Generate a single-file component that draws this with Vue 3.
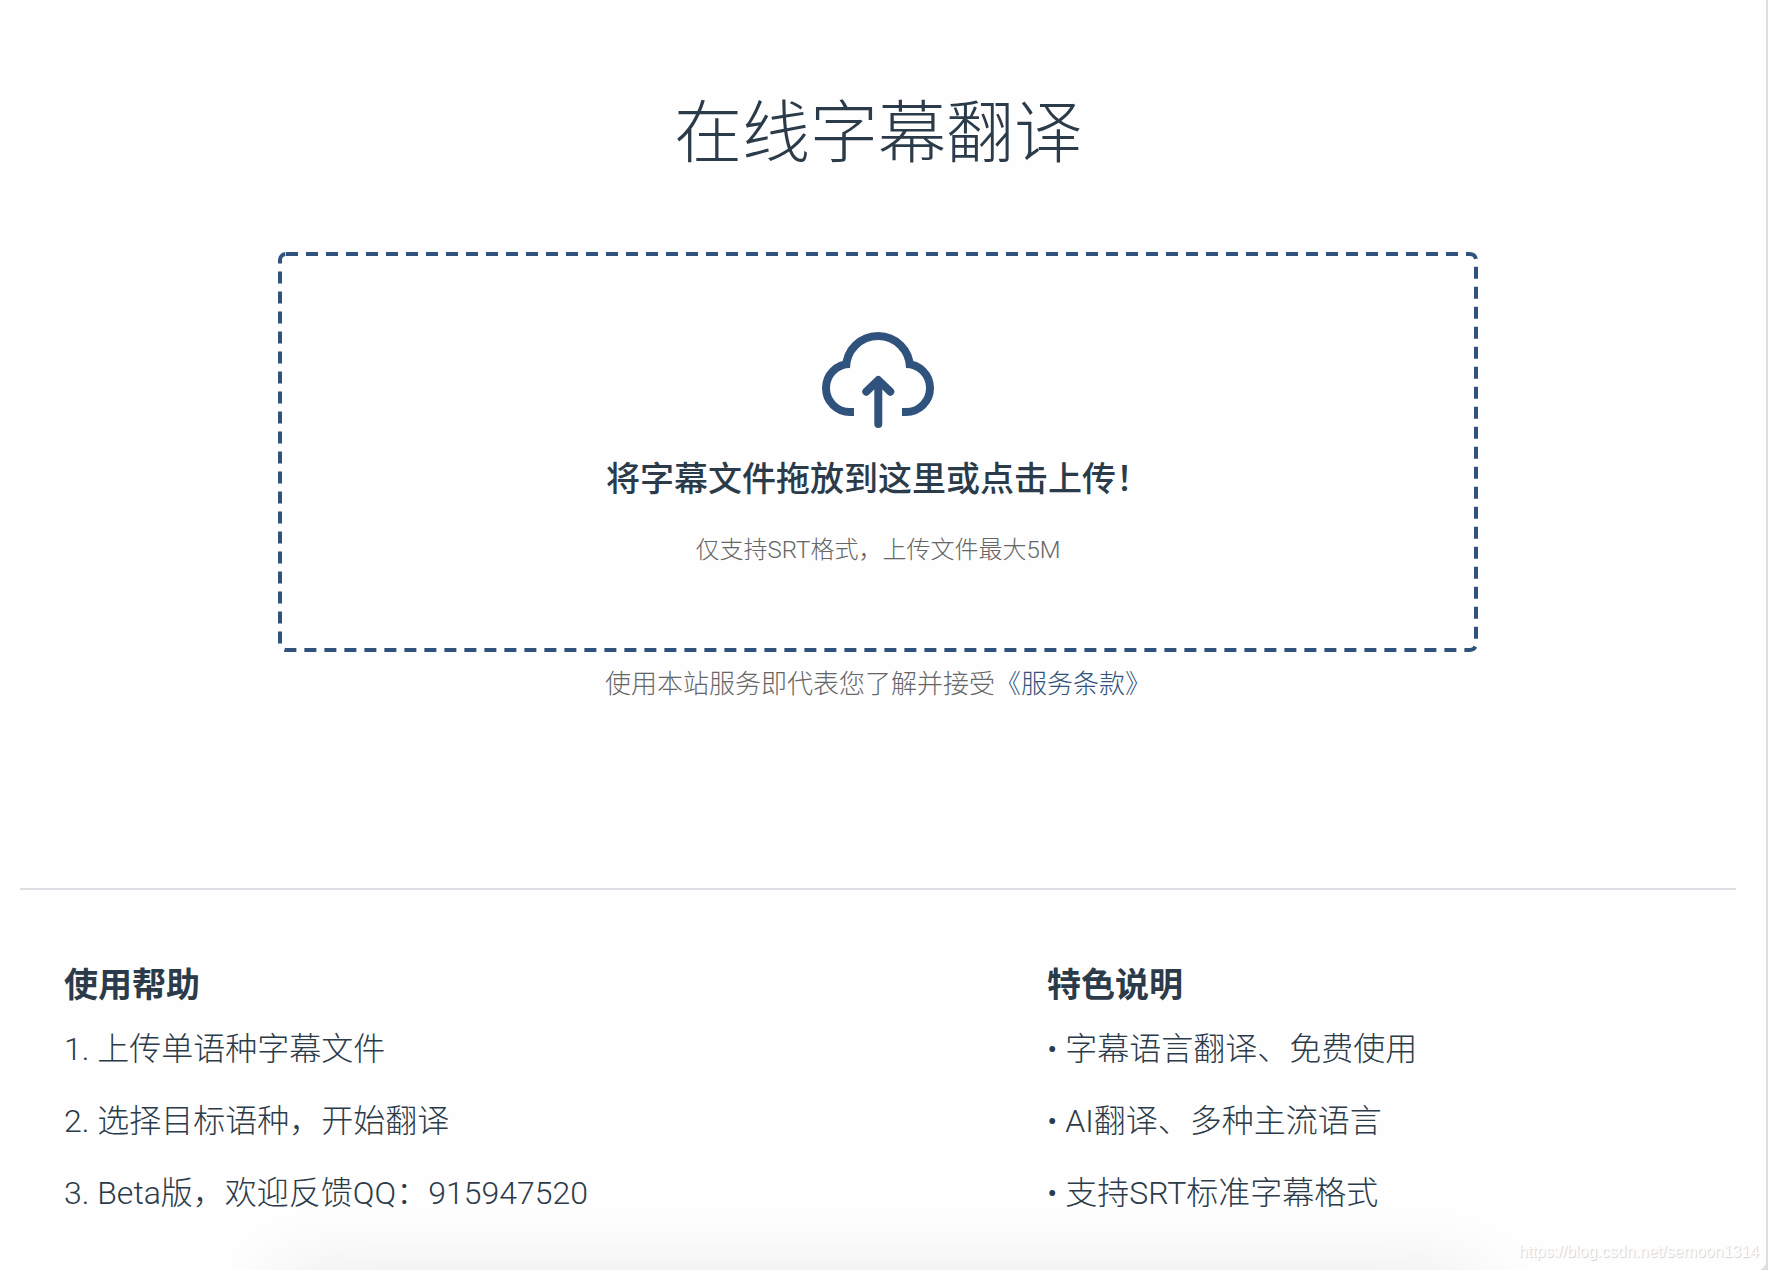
<script setup>
const helpItems = ['上传单语种字幕文件', '选择目标语种，开始翻译', 'Beta版，欢迎反馈QQ：915947520']
const features = ['字幕语言翻译、免费使用', 'AI翻译、多种主流语言', '支持SRT标准字幕格式']
</script>

<template>
  <div class="window">
    <main class="page">
      <section class="hero">
        <h1>在线字幕翻译</h1>
        <button type="button" class="dropzone">
          <svg class="outline" aria-hidden="true"><rect x="2" y="2" rx="6" ry="6" /></svg>
          <svg class="cloud" viewBox="0 0 112 96" aria-hidden="true">
            <path d="M32 80H28A24 24 0 0 1 28 32M24 36A32 32 0 0 1 88 36M84 32A24 24 0 0 1 84 80H80" />
            <path d="M56.300 92V50M44.300 59.700L56.300 48L68.300 59.700" stroke-linecap="round" stroke-linejoin="round" />
          </svg>
          <span class="prompt">将字幕文件拖放到这里或点击上传！</span>
          <span class="limit">仅支持SRT格式，上传文件最大5M</span>
        </button>
        <p class="terms">使用本站服务即代表您了解并接受<a href="#terms">《服务条款》</a></p>
      </section>
      <hr />
      <div class="info">
        <section>
          <h2>使用帮助</h2>
          <ul>
            <li v-for="(item, i) in helpItems" :key="item">{{ i + 1 }}. {{ item }}</li>
          </ul>
        </section>
        <section>
          <h2>特色说明</h2>
          <ul>
            <li v-for="item in features" :key="item">• {{ item }}</li>
          </ul>
        </section>
      </div>
    </main>
    <div class="shade"></div>
    <span class="watermark">https://blog.csdn.net/semoon1314</span>
  </div>
</template>

<style>
body {
  margin: 0;
  background: #dedede;
}
</style>

<style scoped>
.window {
  position: relative;
  overflow: hidden;
  min-height: 100vh;
  margin-right: 2px;
  box-sizing: border-box;
  padding-right: 10px;
  border-bottom-right-radius: 8px;
  background: #fefefe;
  color: #2b3b49;
  font-family: Roboto, "Noto Sans CJK SC", sans-serif;
  font-weight: 300;
}
.page {
  padding: 0 20px;
}
.hero {
  display: flex;
  flex-direction: column;
  align-items: center;
  padding-top: 84px;
}
h1 {
  margin: 0;
  font-size: 68px;
  line-height: 100px;
  font-weight: 300;
}
.dropzone {
  position: relative;
  display: flex;
  flex-direction: column;
  align-items: center;
  width: 100%;
  max-width: 1200px;
  height: 400px;
  margin-top: 68px;
  padding: 80px 0 0;
  border: 0;
  background: none;
  color: inherit;
  font: inherit;
  cursor: pointer;
}
.outline {
  position: absolute;
  inset: 0;
  width: 100%;
  height: 100%;
}
.outline rect {
  width: calc(100% - 4px);
  height: calc(100% - 4px);
  fill: none;
  stroke: #2f537d;
  stroke-width: 4px;
  stroke-dasharray: 12 8;
}
.cloud {
  width: 112px;
  height: 96px;
  fill: none;
  stroke: #2f537d;
  stroke-width: 8px;
}
.prompt {
  margin-top: 26px;
  font-size: 34px;
  line-height: 50px;
  font-weight: 500;
}
.limit {
  margin-top: 28px;
  font-size: 24px;
  line-height: 36px;
  color: #666;
}
.terms {
  margin: 12px 0 0;
  font-size: 26px;
  line-height: 40px;
  color: #666;
}
.terms a {
  color: #2f537d;
  text-decoration: none;
}
hr {
  height: 2px;
  margin: 184px 0 0;
  border: 0;
  background: #dce0e5;
}
.info {
  display: grid;
  grid-template-columns: 983fr 733fr;
  padding: 69px 0 0 44px;
  margin-right: -44px;
}
h2 {
  margin: 0;
  font-size: 34px;
  line-height: 52px;
  font-weight: 700;
}
ul {
  margin: 14px 0 0;
  padding: 0;
  list-style: none;
}
li {
  font-size: 32px;
  line-height: 48px;
  margin-bottom: 24px;
}
li:last-child {
  margin-bottom: 0;
}
.shade {
  position: absolute;
  left: 280px;
  right: 290px;
  bottom: -60px;
  height: 50px;
  box-shadow: 0 0 80px rgba(0, 0, 0, 0.12);
}
.watermark {
  position: absolute;
  right: 7px;
  bottom: 8px;
  font-family: "Liberation Sans", Arial, sans-serif;
  font-size: 16px;
  line-height: 20px;
  font-weight: 400;
  color: #fff;
  text-shadow: 1px 1px 1px #d0d0d0;
}
</style>
